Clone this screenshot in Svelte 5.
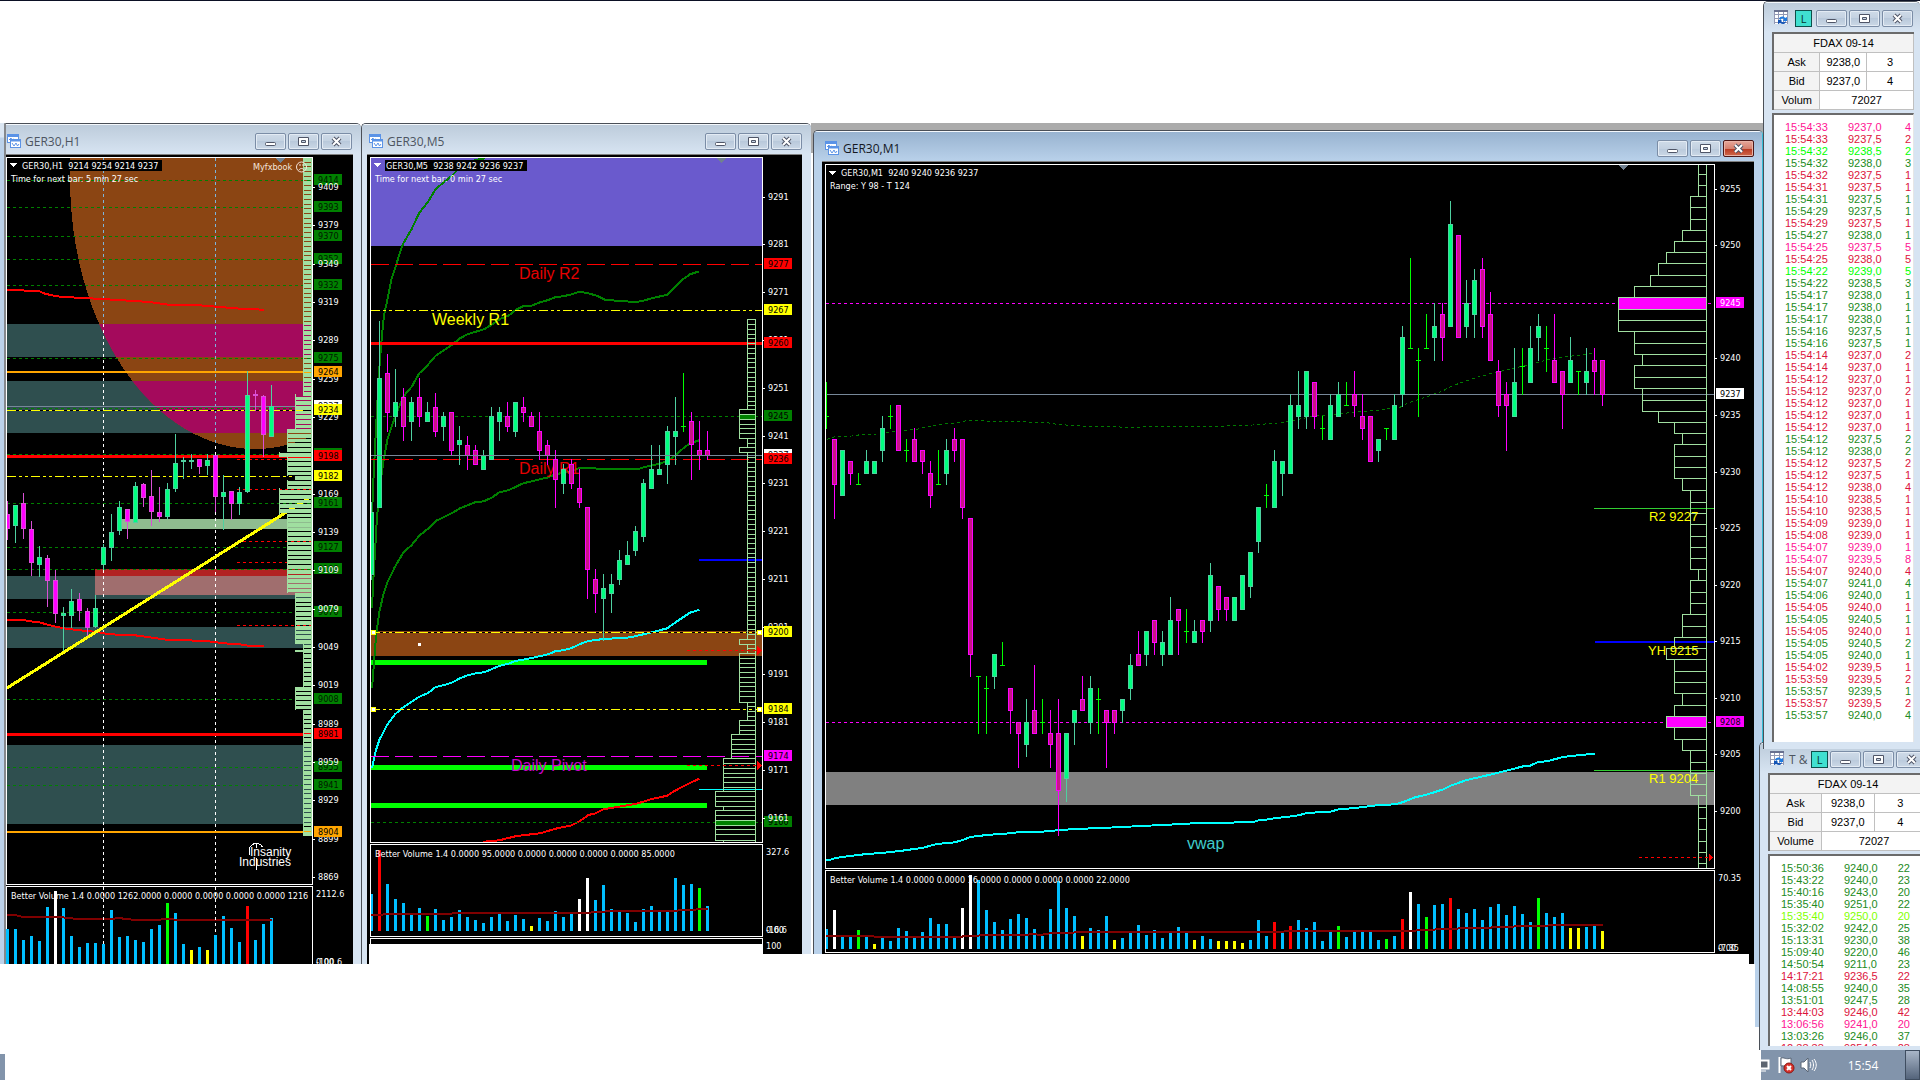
<script lang="ts">
  type Candle = { kind: string; x: number; hi: number; top: number; bottom: number; lo: number };
  type Bar = { x: number; y: number; color: string };

  // Series are stored in sub-pixels: three to a pixel, counted from a pane origin.
  const SUB = 3;

  const COLORS: Record<string, string> = {
    b: "#00bfff",
    w: "#ffffff",
    r: "#ff0000",
    g: "#00ff00",
    y: "#ffff00",
  };

  function candles(data: string, ox: number, oy: number, x0: number): Candle[] {
    return data
      .trim()
      .split(/\s*;\s*/)
      .map((row, i) => {
        const [kind, ...v] = row.split(" ");
        const [hi, top, bottom, lo] = v.map((n) => oy + Math.round(Number(n) / SUB));
        return { kind, x: ox + Math.floor((x0 + 24 * i) / SUB), hi, top, bottom, lo };
      });
  }

  function bars(data: string, ox: number, oy: number, x0: number): Bar[] {
    return data
      .trim()
      .split(/\s+/)
      .map((item, i) => {
        const key = /[a-z]/.test(item[0]) ? item[0] : "b";
        const value = Number(item.replace(/[a-z]/, ""));
        return {
          x: ox + Math.floor((x0 + 24 * i) / SUB) - 1,
          y: oy + Math.round(value / SUB),
          color: COLORS[key],
        };
      });
  }

  function curve(data: string, ox: number, oy: number): string {
    return data
      .trim()
      .split(/\s+/)
      .map((p) => {
        const [x, y] = p.split(",").map(Number);
        return `${(ox + x / SUB).toFixed(1)},${(oy + y / SUB).toFixed(1)}`;
      })
      .join(" ");
  }

  // Outlined volume profile, one cell per price step, growing to the left
  function profile(steps: number[][], right: number, oy: number, step: number): string {
    let d = "";
    for (const [from, to, size] of steps) {
      const left = right - 8 * size;
      const y0 = oy + Math.round(from / SUB) + 0.5;
      const y1 = oy + Math.round(to / SUB) + 0.5;
      d += `M${left + 0.5} ${y0}H${right + 0.5}V${y1}H${left + 0.5}Z`;
      for (let y = from + step; y < to - 4; y += step) {
        d += `M${left} ${oy + Math.round(y / SUB) + 0.5}H${right}`;
      }
    }
    return d;
  }

  // H1 ---------------------------------------------------------------
  const h1Candles = candles(
    `m 1158 1197 1242 1275; g 1170 1170 1232 1284; m 1134 1165 1242 1272; m 1218 1243 1343 1383;
     g 1293 1327 1349 1385; m 1320 1330 1397 1475; m 1365 1396 1496 1524; g 1476 1494 1502 1613;
     g 1422 1458 1502 1538; m 1434 1453 1487 1517; m 1479 1488 1538 1571; g 1440 1479 1535 1538;
     g 1287 1295 1349 1365; g 1197 1251 1298 1337; g 1158 1176 1247 1260; m 1183 1183 1220 1272;
     g 1101 1113 1225 1225; m 1104 1107 1148 1176; m 1065 1143 1190 1232; m 1116 1191 1206 1220;
     g 1104 1122 1205 1212; g 957 1044 1122 1131; g 1026 1035 1041 1092; g 1018 1035 1041 1062;
     m 1032 1032 1055 1077; g 1018 1035 1053 1080; m 1020 1020 1145 1192; g 1080 1131 1145 1245;
     m 1128 1128 1166 1215; g 1116 1131 1166 1200; g 768 840 1131 1134; m 825 837 842 888;
     m 840 843 960 1026; g 810 873 966 966`,
    0, 115, 23,
  );
  const h1Bars = bars(
    `1167 1167 1200 1188 1203 1101 w1053 1104 1188 1221 1209 1209 1212 1110 1191 1188 1200 1206
     1167 1155 g1089 1119 1212 y1230 1221 y1230 1185 1128 1164 1206 r1098 1200 1152 1134`,
    0, 540, 23,
  );
  const h1Upper = curve(
    "21,525 70,525 75,528 118,529 135,536 165,543 190,546 235,548 305,552 450,561 505,569 600,571 660,576 720,581 791,584",
    0, 115,
  );
  const h1Lower = curve(
    "21,240 70,240 90,244 118,247 150,256 190,265 240,271 290,276 330,283 405,286 500,299 620,303 670,310 720,313 745,317 791,318",
    0, 540,
  );
  const h1Average = curve(
    "21,1125 45,1125 70,1131 190,1131 195,1134 240,1137 335,1137 355,1134 405,1140 480,1140 485,1137 520,1137 525,1140 816,1140",
    0, 540,
  );
  const h1Scale: [string, number][] = [
    ["9379", 225], ["9319", 302], ["9289", 340], ["9259", 379], ["9229", 417], ["9169", 494],
    ["9139", 532], ["9049", 647], ["9019", 685], ["8989", 724], ["8929", 800], ["8899", 839],
    ["8869", 877],
  ];
  // Prices painted over the tags instead of under them
  const h1ScaleTop: [string, number][] = [
    ["9409", 187], ["9349", 264], ["9109", 570], ["9079", 609], ["8959", 762],
  ];
  const h1Green: [string, number][] = [
    ["9414", 180], ["9393", 207], ["9370", 236], ["9352", 259], ["9332", 285], ["9275", 358],
    ["9235", 408], ["9199", 454], ["9161", 503], ["9127", 547], ["9109", 569], ["9070", 612],
    ["9008", 699], ["8955", 767], ["8941", 785],
  ];
  const h1Tags: [string, number, string][] = [
    ["9237", 406, "#ffffff"], ["9264", 372, "#ffa500"], ["9234", 410, "#ffff00"],
    ["9198", 456, "#ff0000"], ["9182", 476, "#ffff00"], ["8981", 734, "#ff0000"],
    ["8904", 832, "#ffa500"],
  ];
  const h1Zones: [number, number][] = [[324, 33], [381, 52], [576, 23], [627, 21], [745, 79]];
  // [top, bottom, left edge] of each block of the profile
  const h1Blocks: number[][] = [
    [158, 394, 303], [394, 430, 295], [430, 452, 287], [452, 455, 279], [455, 476, 287],
    [476, 480, 295], [480, 488, 287], [488, 515, 279], [515, 593, 287], [593, 644, 295],
    [644, 688, 303], [688, 710, 295], [710, 836, 303],
  ];

  function stripes(blocks: number[][]) {
    const out: { x: number; y: number; h: number }[] = [];
    for (let n = 0; n < 145; n++) {
      const y = 158 + Math.round(n * 4.68);
      const next = 158 + Math.round((n + 1) * 4.68);
      const block = blocks.find((b) => y >= b[0] - 1 && y < b[1] - 1);
      if (block) out.push({ x: block[2], y, h: next - y - 1 });
    }
    return out;
  }

  // M5 ---------------------------------------------------------------
  const m5Candles = candles(
    `g 1160 1190 1380 1395; g 618 790 1178 1178; m 717 773 893 950; g 762 861 906 935;
     m 819 846 935 977; g 846 861 920 977; m 789 846 906 935; g 861 891 920 920;
     m 834 876 950 965; g 891 903 935 977; m 891 891 1007 1022; g 933 975 991 1049;
     m 963 990 1022 1064; m 990 1005 1049 1049; g 1005 1020 1064 1064; g 876 903 1034 1034;
     g 876 891 920 977; m 861 903 935 950; g 861 861 950 965; m 846 876 893 920;
     m 891 903 935 935; m 891 948 1007 1034; m 975 990 1022 1049; m 1005 1032 1094 1178;
     g 1047 1062 1106 1136; m 1032 1047 1106 1121; m 1062 1119 1163 1178; m 1177 1177 1365 1452;
     m 1362 1392 1436 1493; g 1377 1419 1452 1578; g 1377 1407 1436 1493; g 1305 1335 1394 1409;
     g 1278 1320 1349 1349; g 1233 1248 1307 1322; g 1092 1104 1265 1280; g 990 1062 1121 1121;
     g 990 1062 1079 1079; g 933 948 1049 1106; g 846 948 965 1049; d 774 933 933 950;
     m 891 918 991 1094; m 918 1005 1022 1064; m 948 1005 1022 1034`,
    360, 115, 34,
  );
  const m5Bars = bars(
    `1062 r930 1032 1077 1089 1125 1104 g1128 1107 1140 1131 1110 1131 1140 1149 1131 1119 1143
     1125 1137 y1158 1134 1143 1113 1131 1122 w1077 w1014 1080 1035 1107 1116 1119 1146 1107 1098
     1113 1113 1014 1035 1032 g1044 1098`,
    360, 540, 34,
  );
  const m5Bands = [
    curve(
      "36,1200 40,1100 45,1000 50,900 58,760 65,670 72,600 83,550 95,490 107,455 120,412 130,385 155,342 178,293 203,262 227,222 250,203 275,183 292,165 345,135 375,130",
      360, 115,
    ),
    curve(
      "36,1480 40,1395 47,1275 50,1220 58,1130 70,1040 83,970 107,900 130,845 155,815 178,775 203,750 227,722 275,690 300,670 322,658 348,650 372,643 397,628 420,612 445,602 470,583 490,573 515,572 540,562 565,555 587,546 610,544 635,538 658,530 685,535 710,542 735,554 780,558 830,561 850,557 875,550 922,539 945,515 970,492 990,478 1018,469",
      360, 115,
    ),
    curve(
      "36,1720 42,1645 48,1565 58,1490 70,1440 83,1400 105,1355 130,1313 155,1290 178,1262 203,1242 227,1218 275,1195 300,1180 345,1162 372,1159 397,1147 418,1132 445,1126 490,1105 540,1093 565,1087 587,1078 635,1068 660,1058 705,1058 710,1062 835,1062 850,1057 900,1046 922,1038 945,1022 970,1000 990,985 1018,976",
      360, 115,
    ),
  ];
  const m5Vwap = curve(
    "36,685 45,640 58,600 83,552 105,523 130,502 178,470 203,460 227,441 250,436 275,428 300,415 322,406 348,400 372,397 418,378 445,371 467,363 515,354 565,343 587,333 610,331 635,324 660,312 685,303 730,297 800,293 825,289 875,277 922,265 945,248 990,218 1018,209",
    360, 540,
  );
  const m5Red = curve(
    "370,905 418,901 445,894 470,888 540,880 587,866 635,856 660,843 685,825 707,820 730,808 760,803 830,791 875,777 922,767 945,752 990,729 1018,716",
    360, 540,
  );
  const m5Average = curve(
    "33,1125 83,1123 325,1120 685,1118 755,1113 945,1112 1020,1108 1043,1106",
    360, 540,
  );
  const m5Profile = profile(
    [
      [613, 883, 1], [883, 970, 2], [970, 997, 1], [997, 1012, 2], [1012, 1572, 1],
      [1572, 1586, 2], [1586, 1614, 1], [1614, 1760, 2], [1760, 1816, 1], [1816, 1858, 2],
      [1858, 1930, 3], [1930, 2029, 4], [2029, 2074, 5], [2074, 2086, 4], [2086, 2174, 5],
      [2174, 2181, 4],
    ],
    755, 115, 14.34,
  );
  const m5Scale: [string, number][] = [
    ["9291", 197], ["9281", 244], ["9271", 292], ["9261", 340], ["9251", 388], ["9241", 436],
    ["9231", 483], ["9221", 531], ["9211", 579], ["9201", 627], ["9191", 674], ["9181", 722],
    ["9171", 770],
  ];
  const m5Tags: [string, number, string][] = [
    ["9277", 264, "#ff0000"], ["9267", 310, "#ffff00"], ["9260", 343, "#ff0000"],
    ["9245", 416, "#008000"], ["9237", 455, "#ffffff"], ["9236", 459, "#ff0000"],
    ["9200", 632, "#ffff00"], ["9184", 709, "#ffff00"], ["9174", 756, "#ff00ff"],
    ["9160", 822, "#008000"],
  ];

  // M1 ---------------------------------------------------------------
  const m1Candles = candles(
    `d 786 889 889 927; m 957 957 1095 1197; g 990 990 1128 1128; m 1023 1023 1062 1095;
     d 1059 1092 1092 1095; g 990 1023 1062 1062; g 1023 1023 1062 1062; g 888 924 993 1026;
     d 855 888 888 927; m 855 855 993 993; d 957 990 990 1026; m 924 957 1026 1026;
     m 990 990 1026 1062; m 1023 1059 1128 1164; d 990 1092 1092 1095; g 957 990 1062 1095;
     m 924 957 993 1026; m 957 957 1164 1197; m 1194 1194 1605 1671; d 1668 1668 1668 1842;
     d 1668 1704 1704 1842; g 1602 1602 1671 1707; d 1566 1635 1635 1638; m 1704 1704 1773 1842;
     m 1806 1806 1842 1945; g 1737 1806 1875 1911; m 1635 1770 1842 1842; d 1737 1806 1806 1842;
     m 1770 1839 1875 1945; m 1737 1839 2013 2148; g 1839 1839 1977 2046; g 1770 1770 1809 1875;
     m 1668 1737 1773 1773; g 1668 1704 1809 1842; d 1704 1737 1737 1842; m 1770 1770 1809 1945;
     m 1770 1770 1809 1842; g 1737 1737 1773 1809; g 1602 1635 1707 1740; m 1533 1602 1638 1638;
     g 1533 1533 1605 1638; m 1500 1500 1569 1605; g 1533 1566 1605 1638; g 1431 1500 1605 1605;
     m 1467 1467 1503 1605; d 1467 1533 1533 1569; g 1500 1533 1569 1569; m 1500 1500 1536 1569;
     g 1329 1365 1503 1536; m 1398 1398 1470 1503; m 1431 1431 1470 1503; g 1431 1431 1503 1503;
     g 1365 1365 1470 1470; g 1296 1296 1401 1434; g 1161 1161 1266 1299; d 1092 1125 1125 1164;
     g 990 1023 1164 1164; g 1023 1023 1062 1128; g 822 855 1062 1062; g 753 855 891 927;
     g 753 753 891 927; m 786 786 891 927; d 888 924 924 960; g 822 855 960 960;
     g 786 822 891 891; d 786 855 855 858; m 753 822 858 891; m 822 888 927 960;
     m 888 888 1026 1026; g 957 957 993 1026; d 924 924 924 960; g 822 855 960 960;
     g 618 651 825 860; d 414 684 684 687; d 684 720 720 891; d 582 684 684 687;
     g 549 618 654 723; m 549 582 654 723; g 243 312 621 621; m 345 345 654 654;
     g 480 549 621 654; g 447 480 585 654; m 414 447 621 654; m 516 582 723 723;
     m 720 753 858 891; m 786 822 858 993; g 684 786 891 891; d 684 738 738 825;
     g 618 684 789 789; g 582 618 654 723; d 618 684 684 756; m 582 720 789 789;
     m 753 753 825 927; g 651 720 789 789; d 753 753 753 825; g 684 753 789 825;
     m 684 720 756 825; m 720 720 825 858`,
    810, 120, 49,
  );
  const m1Bars = bars(
    `1167 w1110 1188 1188 g1170 1188 y1212 1194 1203 1164 1173 1191 1176 1134 1152 1152 1191 w1104
     w1005 1020 1110 1146 1170 1137 1122 1134 1167 1188 1107 1023 1104 1128 y1188 1164 1170 1128
     y1200 1194 1179 1155 1185 1170 1194 1179 1161 1179 y1200 1188 1197 y1203 y1203 y1203 y1209
     1200 1140 1188 r1146 1179 r1158 1140 1164 1146 1203 1176 g1158 1191 1176 1176 1176 1200 g1197
     1188 r1137 w1056 1092 g1131 1095 1092 r1074 1107 1119 1107 1140 1101 1092 1125 1098 1122 1146
     g1074 1119 1131 1119 y1164 y1164 1161 1158 y1173`,
    810, 540, 49,
  );
  const m1Mean = curve(
    "50,958 75,950 125,948 160,943 200,942 230,937 255,935 300,930 325,927 345,922 370,917 400,912 440,909 470,902 510,901 530,904 630,905 710,908 740,913 810,918 930,921 995,921 1010,919 1250,918 1265,916 1330,915 1400,909 1425,907 1450,901 1510,889 1600,880 1710,870 1770,862 1795,849 1840,834 1900,812 1925,798 2000,772 2050,759 2110,745 2175,730 2230,715 2270,710 2345,701",
    810, 120,
  );
  const m1Vwap = curve(
    "48,960 60,960 75,954 120,948 170,942 215,939 270,933 340,923 380,912 435,907 465,898 480,891 530,885 600,880 630,876 695,875 750,870 800,867 870,864 940,861 990,858 1060,855 1150,850 1250,848 1330,846 1350,840 1380,838 1395,834 1430,831 1470,825 1490,819 1560,815 1590,807 1630,805 1700,796 1755,793 1780,786 1815,772 1850,764 1900,748 1925,736 1970,720 2020,709 2070,697 2140,679 2160,677 2185,666 2210,664 2260,651 2310,645 2355,641",
    810, 540,
  );
  const m1Average = curve(
    "48,1188 190,1188 195,1191 455,1191 460,1188 505,1188 510,1185 655,1184 665,1181 690,1185 720,1180 790,1178 800,1176 1420,1175 1430,1172 1800,1172 1870,1170 1880,1167 1940,1167 1950,1164 2040,1164 2050,1161 2105,1161 2120,1158 2210,1158 2220,1155 2379,1155",
    810, 540,
  );
  const m1Profile = profile(
    [
      [127, 228, 1], [228, 330, 2], [330, 364, 3], [364, 397, 4], [397, 430, 5], [430, 466, 6],
      [466, 499, 7], [499, 532, 9], [532, 634, 11], [634, 703, 9], [703, 736, 8], [736, 805, 9],
      [805, 874, 8], [874, 907, 6], [907, 940, 4], [940, 973, 3], [973, 1075, 4], [1075, 1111, 3],
      [1111, 1348, 2], [1348, 1381, 1], [1381, 1483, 2], [1483, 1552, 3], [1552, 1585, 4],
      [1585, 1618, 5], [1618, 1720, 4], [1720, 1756, 3], [1756, 1789, 4], [1789, 1822, 5],
      [1822, 1858, 4], [1858, 1891, 3], [1891, 2026, 2], [2026, 2244, 1],
    ],
    1706, 120, 33.95,
  );
  const m1Scale: [string, number][] = [
    ["9255", 189], ["9250", 245], ["9240", 358], ["9235", 415], ["9230", 472], ["9225", 528],
    ["9220", 585], ["9215", 641], ["9210", 698], ["9205", 754], ["9200", 811],
  ];
  const m1Tags: [string, number, string][] = [
    ["9245", 303, "#ff00ff"], ["9237", 394, "#ffffff"], ["9208", 722, "#ff00ff"],
  ];

  // Time & sales -----------------------------------------------------
  function trades(data: string) {
    return data
      .trim()
      .split(/\s*;\s*/)
      .map((row) => {
        const [kind, time, price, size] = row.split(" ");
        return { kind, time, price, size };
      });
  }

  const tape = trades(
    `pink 15:54:33 9237,0 4; red 15:54:33 9237,5 2; lime 15:54:32 9238,5 2; green 15:54:32 9238,0 3;
     red 15:54:32 9237,5 1; red 15:54:31 9237,5 1; green 15:54:31 9237,5 1; green 15:54:29 9237,5 1;
     red 15:54:29 9237,5 1; green 15:54:27 9238,0 1; pink 15:54:25 9237,5 5; red 15:54:25 9238,0 5;
     lime 15:54:22 9239,0 5; green 15:54:22 9238,5 3; green 15:54:17 9238,0 1; green 15:54:17 9238,0 1;
     green 15:54:17 9238,0 1; green 15:54:16 9237,5 1; green 15:54:16 9237,5 1; red 15:54:14 9237,0 2;
     red 15:54:14 9237,0 1; red 15:54:12 9237,0 1; red 15:54:12 9237,0 2; red 15:54:12 9237,0 1;
     red 15:54:12 9237,0 1; red 15:54:12 9237,0 1; green 15:54:12 9237,5 2; green 15:54:12 9238,0 2;
     red 15:54:12 9237,5 2; red 15:54:12 9237,5 1; red 15:54:12 9238,0 4; red 15:54:10 9238,5 1;
     red 15:54:10 9238,5 1; red 15:54:09 9239,0 1; red 15:54:08 9239,0 1; pink 15:54:07 9239,0 1;
     pink 15:54:07 9239,5 8; red 15:54:07 9240,0 4; green 15:54:07 9241,0 4; green 15:54:06 9240,0 1;
     red 15:54:05 9240,0 1; green 15:54:05 9240,5 1; red 15:54:05 9240,0 1; green 15:54:05 9240,5 2;
     green 15:54:05 9240,0 1; red 15:54:02 9239,5 1; red 15:53:59 9239,5 2; green 15:53:57 9239,5 1;
     red 15:53:57 9239,5 2; green 15:53:57 9240,0 4`,
  );
  const blocks = trades(
    `green 15:50:36 9240,0 22; green 15:43:22 9240,0 23; green 15:40:16 9243,0 20;
     green 15:35:40 9251,0 22; chartreuse 15:35:40 9250,0 20; green 15:32:02 9242,0 25;
     green 15:13:31 9230,0 38; green 15:09:40 9220,0 46; green 14:50:54 9211,0 23;
     red 14:17:21 9236,5 22; green 14:08:55 9240,0 35; green 13:51:01 9247,5 28;
     red 13:44:03 9246,0 42; pink 13:06:56 9241,0 20; green 13:03:26 9246,0 37;
     red 12:38:38 9254,0 28`,
  );
</script>

{#snippet chartIcon()}
  <svg class="icon" width="16" height="16" viewBox="0 0 16 16" aria-hidden="true">
    <rect x="1.5" y="1.5" width="11" height="8" fill="#fff" stroke="#5b93e6" />
    <path d="M1 3h12" stroke="#5b93e6" stroke-width="2" />
    <path d="M3 7l2-2 1 2 2-1" fill="none" stroke="#5b93e6" />
    <rect x="4.500" y="6.500" width="10" height="8" fill="#fff" stroke="#5b93e6" />
    <path d="M4 7.500h11" stroke="#5b93e6" stroke-width="2" />
    <path d="M6 10l2 3 2-3 1.500 3 1.500-2" fill="none" stroke="#5b93e6" />
  </svg>
{/snippet}

{#snippet gridIcon()}
  <svg class="icon" width="15" height="15" viewBox="0 0 15 15" aria-hidden="true">
    <rect width="14" height="14" fill="#fff" />
    <path d="M0 .5h14M0 4.500h14M0 8.500h14M0 12.500h14M.5 0v14M4.500 0v14M9.500 0v14M13.500 0v14" stroke="#9298b4" />
    <path d="M0 1h14" stroke="#68708f" stroke-width="2" />
    <path d="M5 9c1-3 5-3 6-1l2-1v4H9l1-2c-1-1-3-1-3 1z" fill="#1f7be0" />
    <path d="M4 14v-4h4l-1 1c2 2 4 1 5 0 0 3-3 4-6 2z" fill="#1253b5" />
  </svg>
{/snippet}

{#snippet controls()}
  <div class="controls">
    <button type="button" aria-label="Minimize">
      <svg width="13" height="11" viewBox="0 0 13 11">
        <rect x="1.500" y="6.500" width="10" height="3" rx="1" fill="#fff" stroke="#4f5567" />
      </svg>
    </button>
    <button type="button" aria-label="Restore">
      <svg width="13" height="11" viewBox="0 0 13 11">
        <path d="M1.500 1.500h10v8h-10z" fill="#fff" stroke="#4f5567" />
        <path d="M4.500 4.500h4v2h-4z" fill="#c8d6e6" stroke="#4f5567" />
      </svg>
    </button>
    <button type="button" class="close" aria-label="Close">
      <svg width="13" height="11" viewBox="0 0 13 11">
        <path d="M3 2l7 7M10 2l-7 7" stroke="#4f5567" stroke-width="4" />
        <path d="M3 2l7 7M10 2l-7 7" stroke="#fff" stroke-width="2" />
      </svg>
    </button>
  </div>
{/snippet}

{#snippet candleSet(list: Candle[], style: string)}
  <g class="candles {style}">
    {#each list as c}
      <g class={c.kind}>
        <rect class="edge" x={c.x} y={c.hi} width="1" height={c.lo - c.hi} />
        {#if c.kind === "d"}
          <rect class="edge" x={c.x - 2} y={c.top} width="5" height="1" />
        {:else}
          <rect class="edge" x={c.x - 2} y={c.top} width="5" height={c.bottom - c.top} />
          <rect class="body" x={c.x - 1} y={c.top + 1} width="3" height={Math.max(0, c.bottom - c.top - 2)} />
        {/if}
      </g>
    {/each}
  </g>
{/snippet}

{#snippet volume(list: Bar[], base: number, average: string)}
  {#each list as b}
    <rect x={b.x} y={b.y} width="3" height={base - b.y} fill={b.color} />
  {/each}
  <polyline points={average} class="average" />
{/snippet}

{#snippet scale(list: [string, number][], x: number)}
  {#each list as [label, y]}
    <rect x={x} y={y} width="2" height="1" fill="#fff" />
    <text x={x + 5} y={y + 3}>{label}</text>
  {/each}
{/snippet}

{#snippet tag(label: string, y: number, x: number, color: string, ink: string)}
  <rect {x} y={y - 6} width="28" height="11" fill={color} />
  <text x={x + 4} y={y + 3} fill={ink}>{label}</text>
{/snippet}

{#snippet level(y: number, from: number, to: number, style: string)}
  <line x1={from} x2={to} y1={y + 0.5} y2={y + 0.5} class={style} />
{/snippet}

{#snippet quote(volumeLabel: string)}
  <table class="quote">
    <thead>
      <tr><th colspan="3">FDAX 09-14</th></tr>
    </thead>
    <tbody>
      <tr><th scope="row">Ask</th><td>9238,0</td><td>3</td></tr>
      <tr><th scope="row">Bid</th><td>9237,0</td><td>4</td></tr>
      <tr><th scope="row">{volumeLabel}</th><td colspan="2">72027</td></tr>
    </tbody>
  </table>
{/snippet}

{#snippet sales(list: ReturnType<typeof trades>)}
  <div class="tape">
    <table>
      <tbody>
        {#each list as t}
          <tr class={t.kind}><td>{t.time}</td><td>{t.price}</td><td>{t.size}</td></tr>
        {/each}
      </tbody>
    </table>
  </div>
{/snippet}

<main class="desktop">
  <div class="edge-top"></div>
  <div class="backdrop"></div>
  <div class="stub"></div>
  <div class="stub-bottom"></div>

  <section class="window h1">
    <header class="titlebar">
      {@render chartIcon()}
      <h2>GER30,H1</h2>
      {@render controls()}
    </header>
    <svg class="chart" width="347" height="810" viewBox="6 154 347 810">
      <defs>
        <clipPath id="h1-pane"><rect x="7" y="158" width="305" height="726" /></clipPath>
        <clipPath id="h1-ellipse"><ellipse cx="255" cy="178" rx="185" ry="271" /></clipPath>
      </defs>
      <rect x="6" y="154" width="347" height="1" fill="#808080" />
      <g clip-path="url(#h1-pane)">
        {#each h1Zones as [y, h]}
          <rect x="7" {y} width="305" height={h} fill="#2f4f4f" />
        {/each}
        <ellipse cx="255" cy="178" rx="185" ry="271" fill="#8b4513" />
        <g clip-path="url(#h1-ellipse)">
          <rect x="7" y="324" width="305" height="33" fill="#a40a5c" />
          <rect x="7" y="381" width="305" height="52" fill="#a40a5c" />
        </g>
        <rect x="120" y="519" width="192" height="10" fill="#8fbc8f" />
        <rect x="95" y="569" width="217" height="7" fill="#b22222" />
        <rect x="95" y="576" width="217" height="19" fill="#a06e6e" />
        {#each h1Green as [, y]}
          {@render level(y, 7, 313, "dot green")}
        {/each}
        <line x1="103.5" x2="103.5" y1="158" y2="324" class="dot session sky" />
        <line x1="103.5" x2="103.5" y1="324" y2="884" class="dot session" />
        <line x1="215.5" x2="215.5" y1="158" y2="446" class="dot session sky" />
        <line x1="215.5" x2="215.5" y1="446" y2="884" class="dot session" />
        <rect x="7" y="371" width="305" height="2" fill="#ffa500" />
        <rect x="7" y="831" width="305" height="2" fill="#ffa500" />
        <rect x="7" y="455" width="305" height="3" fill="#ff0000" />
        <rect x="7" y="733" width="305" height="3" fill="#ff0000" />
        <rect x="7" y="410" width="305" height="1" fill="#000" />
        {@render level(410, 7, 303, "dashdot yellow")}
        {@render level(476, 7, 303, "dashdot yellow")}
        {@render level(406, 7, 312, "slate")}
        {#each [459, 489, 541, 562, 625] as y}
          {@render level(y, 237, 311, "dot red")}
        {/each}
        <polyline points={h1Upper} class="thick red" />
        <polyline points={h1Lower} class="thick red" />
        {@render candleSet(h1Candles, "orchid")}
        <line x1="7" y1="688" x2="312" y2="496" class="trend" />
        <g fill="#a0dfa0">
          {#each stripes(h1Blocks) as s}
            <rect x={s.x} y={s.y} width={312 - s.x} height={s.h} />
          {/each}
          {#each h1Blocks as [top, bottom, left]}
            <rect x={left} y={top} width="1" height={bottom - top} />
          {/each}
          <rect x="311" y="158" width="1" height="678" />
          <rect x="295" y="650" width="8" height="2" />
        </g>
      </g>
      <path d="M275 158h10l-5 5z" fill="#708090" />
      <path d="M6.500 157.500h306v727h-306zM6.500 964v-77.500h306v77.500" class="frame" />
      {@render volume(h1Bars, 964, h1Average)}
      <line x1="103.5" x2="103.5" y1="887" y2="945" class="dot session" />
      <line x1="215.5" x2="215.5" y1="887" y2="935" class="dot session" />
      <rect x="21" y="160" width="141" height="11" fill="#000" />
      <path d="M10 163h7l-3.500 4z" fill="#fff" />
      <text x="22" y="169">GER30,H1&nbsp; 9214 9254 9214 9237</text>
      <text x="11" y="182">Time for next bar: 5 min 27 sec</text>
      <text x="253" y="170" fill="#f5e6dc">Myfxbook</text>
      <g fill="none" stroke="#f5e6dc" class="smooth">
        <circle cx="301.5" cy="167" r="5" />
        <path d="M299 165h2M302 165h2M299 170c1-2 4-2 5 0" />
      </g>
      <g class="insanity">
        <path d="M249.500 855v-7c3-6 10-6 13-1M256 844v4M256 858v12" fill="none" stroke="#fff" />
        <text x="250" y="856">Insanity</text>
        <text x="239" y="866">Industries</text>
      </g>
      <text x="11" y="899">Better Volume 1.4 0.0000 1262.0000 0.0000 0.0000 0.0000 0.0000 1216</text>
      <rect x="313" y="887" width="40" height="20" fill="#000" />
      <text x="316" y="897">2112.6</text>
      <text x="316" y="965">0.00</text>
      <text x="316" y="965">-100.6</text>
      {@render scale(h1Scale, 313)}
      {#each h1Green as [label, y]}
        {@render tag(label, y, 314, "#008000", "#001800")}
      {/each}
      {#each h1Tags as [label, y, color]}
        {@render tag(label, y, 314, color, "#000")}
      {/each}
      {@render scale(h1ScaleTop, 313)}
    </svg>
  </section>

  <section class="window m5">
    <header class="titlebar">
      {@render chartIcon()}
      <h2>GER30,M5</h2>
      {@render controls()}
    </header>
    <svg class="chart" width="435" height="810" viewBox="367 154 435 810">
      <defs>
        <clipPath id="m5-pane"><rect x="371" y="158" width="391" height="684" /></clipPath>
        <clipPath id="m5-volume"><rect x="371" y="845" width="391" height="91" /></clipPath>
      </defs>
      <rect x="367" y="154" width="435" height="1" fill="#808080" />
      <g clip-path="url(#m5-pane)">
        <rect x="371" y="158" width="391" height="88" fill="#6a5acd" />
        <rect x="371" y="631" width="391" height="25" fill="#8b4513" />
        <rect x="371" y="660" width="336" height="5" fill="#00ff00" />
        <rect x="371" y="765" width="336" height="5" fill="#00ff00" />
        <rect x="371" y="803" width="336" height="5" fill="#00ff00" />
        {#each m5Bands as points}
          <polyline {points} class="thick green" />
        {/each}
        <polyline points={m5Vwap} class="thick cyan" />
        <polyline points={m5Red} class="thick red" />
        {@render level(264, 371, 762, "dash red")}
        {@render level(310, 371, 762, "dashdot yellow")}
        <rect x="371" y="342" width="391" height="3" fill="#ff0000" />
        {@render level(416, 371, 762, "dot green")}
        {@render level(459, 371, 762, "dash red")}
        <rect x="371" y="632" width="391" height="1" fill="#000" />
        {@render level(632, 371, 762, "dashdot yellow")}
        {@render level(709, 371, 762, "dashdot yellow")}
        {@render level(756, 371, 762, "dash magenta")}
        {@render level(822, 371, 762, "dot green")}
        <text x="519" y="279" class="note" fill="#e60000">Daily R2</text>
        <text x="432" y="325" class="note" fill="#ffff00">Weekly R1</text>
        <text x="519" y="474" class="note" fill="#e60000">Daily R1</text>
        <text x="511" y="771" class="note" fill="#cc00cc">Daily Pivot</text>
        {@render candleSet(m5Candles, "")}
        {@render level(455, 371, 762, "slate")}
        <rect x="699" y="559" width="63" height="2" fill="#0000ff" />
        <rect x="699" y="789" width="63" height="1" fill="#00ffff" />
        <rect x="739" y="415" width="17" height="4" fill="#008000" />
        <rect x="715" y="821" width="41" height="4" fill="#008000" />
        <path d={m5Profile} class="profile" />
        {@render level(650, 687, 758, "dot red")}
        {@render level(765, 687, 758, "dot red")}
        <path d="M757 646l5 4.500-5 4.500zM757 761l5 4.500-5 4.500z" fill="#ff0000" />
        {#each [632, 709] as y}
          <rect x="371" y={y - 2} width="5" height="5" fill="#ffff00" />
          <rect x="372" y={y - 1} width="3" height="3" fill="#fff" />
          <rect x="757" y={y - 2} width="5" height="5" fill="#ffff00" />
          <rect x="758" y={y - 1} width="3" height="3" fill="#fff" />
        {/each}
        <rect x="418" y="643" width="3" height="3" fill="#fff" />
      </g>
      <path d="M716 158h10l-5 5z" fill="#708090" />
      <path d="M370.500 157.500h392v685h-392zM370.500 844.500h392v92h-392zM370.500 944v-5.500h392v5.500" class="frame" />
      <g clip-path="url(#m5-volume)">
        {@render volume(m5Bars, 931, m5Average)}
      </g>
      <rect x="385" y="160" width="142" height="11" fill="#000" />
      <path d="M374 163h7l-3.500 4z" fill="#fff" />
      <text x="386" y="169">GER30,M5&nbsp; 9238 9242 9236 9237</text>
      <text x="375" y="182">Time for next bar: 0 min 27 sec</text>
      <text x="375" y="857">Better Volume 1.4 0.0000 95.0000 0.0000 0.0000 0.0000 0.0000 85.0000</text>
      {@render scale(m5Scale, 763)}
      {#each m5Tags as [label, y, color]}
        {@render tag(label, y, 764, color, "#000")}
      {/each}
      {@render scale([["9161", 818]], 763)}
      <text x="766" y="855">327.6</text>
      <text x="766" y="933">0.00</text>
      <text x="766" y="933">-16.6</text>
      <text x="766" y="949">100</text>
    </svg>
  </section>

  <section class="window m1 active">
    <header class="titlebar">
      {@render chartIcon()}
      <h2>GER30,M1</h2>
      {@render controls()}
    </header>
    <svg class="chart" width="932" height="866" viewBox="822 161 932 866">
      <defs>
        <clipPath id="m1-pane"><rect x="826" y="165" width="888" height="704" /></clipPath>
        <clipPath id="m1-volume"><rect x="826" y="871" width="888" height="82" /></clipPath>
      </defs>
      <rect x="822" y="161" width="932" height="1" fill="#808080" />
      <g clip-path="url(#m1-pane)">
        <rect x="826" y="772" width="888" height="33" fill="#808080" />
        {@render level(303, 826, 1712, "dot magenta")}
        {@render level(722, 826, 1712, "dot magenta")}
        <polyline points={m1Mean} class="mean" />
        <polyline points={m1Vwap} class="thick cyan" />
        {@render level(394, 826, 1714, "slate")}
        {@render candleSet(m1Candles, "")}
        <rect x="1594" y="508" width="120" height="1" fill="#32cd32" />
        <rect x="1595" y="641" width="119" height="2" fill="#0000ff" />
        <rect x="1594" y="770" width="120" height="1" fill="#32cd32" />
        <rect x="1618" y="297" width="88" height="12" fill="#ff00ff" />
        <rect x="1666" y="716" width="40" height="11" fill="#ff00ff" />
        <path d={m1Profile} class="profile" />
        <text x="1649" y="521" class="pivot" fill="#ffff00">R2 9227</text>
        <text x="1648" y="655" class="pivot" fill="#ffff00">YH 9215</text>
        <text x="1649" y="783" class="pivot" fill="#ffff00">R1 9204</text>
        {@render level(857, 1639, 1711, "dot red")}
        <path d="M1709 854l4 3.500-4 3.500z" fill="#ff0000" />
        <text x="1187" y="849" class="note" fill="#40cccc">vwap</text>
      </g>
      <path d="M1618 165h10l-5 5z" fill="#708090" />
      <path d="M825.500 164.500h889v704h-889zM825.500 870.500h889v82h-889z" class="frame" />
      <g clip-path="url(#m1-volume)">
        {@render volume(m1Bars, 949, m1Average)}
      </g>
      <text x="830" y="883">Better Volume 1.4 0.0000 0.0000 16.0000 0.0000 0.0000 0.0000 22.0000</text>
      <path d="M829 171h7l-3.500 4z" fill="#fff" />
      <text x="841" y="176">GER30,M1&nbsp; 9240 9240 9236 9237</text>
      <text x="830" y="189">Range: Y 98 - T 124</text>
      {@render scale(m1Scale, 1715)}
      {#each m1Tags as [label, y, color]}
        {@render tag(label, y, 1716, color, label === "9245" ? "#fff" : "#000")}
      {/each}
      <text x="1718" y="881">70.35</text>
      <text x="1718" y="951">0.00</text>
      <text x="1718" y="951">-7.35</text>
    </svg>
  </section>

  <section class="window sales-blocks">
    <header class="titlebar">
      {@render gridIcon()}
      <span class="name">T &amp;</span>
      <button type="button" class="link">L</button>
      {@render controls()}
    </header>
    {@render quote("Volume")}
    {@render sales(blocks)}
  </section>

  <section class="window sales-all">
    <header class="titlebar">
      {@render gridIcon()}
      <span class="name"></span>
      <button type="button" class="link">L</button>
      {@render controls()}
    </header>
    {@render quote("Volum")}
    {@render sales(tape)}
  </section>

  <footer class="taskbar">
    <svg width="12" height="16" viewBox="0 0 12 16" aria-hidden="true">
      <path d="M0 3.500h7.500v8H0" fill="#5c6470" stroke="#fff" stroke-width="2" />
      <path d="M0 14h5" stroke="#fff" />
    </svg>
    <svg width="18" height="18" viewBox="0 0 18 18" aria-hidden="true">
      <path d="M2.500 1v16" stroke="#fff" stroke-width="2" />
      <path d="M4 2c3-1 5 2 10 0v8c-4 2-7-1-10 0z" fill="#fff" stroke="#5b6677" />
      <circle cx="12" cy="12" r="5" fill="#d8322c" stroke="#8e1712" />
      <path d="M10 10l4 4M14 10l-4 4" stroke="#fff" stroke-width="2" />
    </svg>
    <svg width="18" height="16" viewBox="0 0 18 16" aria-hidden="true">
      <path d="M2 5h3l4-4v14l-4-4H2z" fill="#fff" stroke="#5b6677" />
      <path d="M11 5c1 2 1 4 0 6M13 3c2 3 2 7 0 10M15 2c3 4 3 8 0 12" fill="none" stroke="#fff" />
    </svg>
    <time>15:54</time>
    <button type="button" class="peek" aria-label="Show desktop"></button>
  </footer>
</main>

<style>
  :global(body) {
    background: #fff;
  }

  .desktop {
    position: relative;
    min-height: 100vh;
    overflow: hidden;
    font-family: "Open Sans", "Noto Sans", sans-serif;
  }

  .edge-top {
    height: 1px;
    background: #0b1024;
  }

  .backdrop {
    position: absolute;
    left: 811px;
    top: 123px;
    width: 952px;
    height: 30px;
    background: #ababab;
  }

  .stub {
    position: absolute;
    left: 0;
    top: 123px;
    width: 4px;
    height: 841px;
    background: linear-gradient(#dbe6f2 14px, #bcd2ea 15px);
  }

  .stub-bottom {
    position: absolute;
    left: 0;
    top: 1054px;
    width: 5px;
    height: 26px;
    background: #8294ab;
  }

  .window {
    position: absolute;
    box-sizing: border-box;
    overflow: hidden;
    display: flex;
    flex-direction: column;
    background: #d7e4f2;
    border: 1px solid #4a4f57;
    border-width: 1px 0 0 1px;
    border-radius: 5px 5px 0 0;
  }

  .h1 {
    left: 4px;
    top: 123px;
    width: 357px;
    height: 841px;
    border-left: 2px solid #85888c;
    border-radius: 0 5px 0 0;
    padding-right: 8px;
  }

  .m5 {
    left: 361px;
    top: 123px;
    width: 450px;
    height: 841px;
    padding: 0 9px 0 5px;
    clip-path: polygon(0 0, 100% 0, 100% 831px, 402px 831px, 402px 821px, 8px 821px, 8px 100%, 0 100%);
  }

  .m1 {
    left: 813px;
    top: 130px;
    width: 950px;
    height: 897px;
    padding: 0 8px;
    border-right: 1px solid #35bcd6;
    background: #b9d1ea;
    clip-path: polygon(0 0, 100% 0, 100% 100%, 942px 100%, 942px 834px, 936px 834px, 936px 824px, 0 824px);
  }

  .titlebar {
    display: flex;
    flex: none;
    align-items: flex-start;
    box-sizing: border-box;
    height: 30px;
    padding-top: 9px;
    margin: 0 -9px 0 -8px;
    padding-left: 10px;
    padding-right: 9px;
    background: linear-gradient(#bccbda, #d7e4f2);
    box-shadow: inset 0 1px #f4f8fc;
  }

  .h1 .titlebar {
    margin: 0 -8px 0 0;
    padding-left: 0;
    padding-right: 9px;
  }

  .m5 .titlebar {
    margin-left: -5px;
    padding-left: 6px;
  }

  .active .titlebar {
    margin-right: -8px;
    padding-right: 8px;
    background: linear-gradient(#97b2cf, #b9d1ea);
  }

  .icon {
    flex: none;
  }

  h2 {
    margin: 0 0 0 3px;
    font-size: 12px;
    line-height: 17px;
    font-weight: 400;
    color: #4d5561;
  }

  .active h2 {
    color: #14181f;
  }

  .controls {
    display: flex;
    flex: none;
    gap: 2px;
    margin-left: auto;
  }

  .controls button {
    display: flex;
    align-items: center;
    justify-content: center;
    width: 31px;
    height: 17px;
    padding: 0;
    border: 1px solid #7b8da6;
    border-radius: 2px;
    background: linear-gradient(#cfdbe8, #c3d1e1 50%, #b9c9db 50%, #cbd8e6);
    box-shadow: inset 0 0 0 1px #e3ebf4;
  }

  .active .controls .close {
    border-color: #4c1717;
    background: linear-gradient(#e6a79b, #d6816f 50%, #b8361f 50%, #cf6a4c);
    box-shadow: inset 0 0 0 1px #e9b3a6;
  }

  /* Charts */
  .chart {
    flex: none;
    display: block;
    background: #000;
    shape-rendering: crispEdges;
    font-family: "DejaVu Sans Condensed", "DejaVu Sans", sans-serif;
    font-size: 9px;
  }

  .chart text {
    white-space: pre;
  }

  .chart text:not([fill]) {
    fill: #fff;
  }

  .smooth {
    shape-rendering: auto;
  }

  .frame {
    fill: none;
    stroke: #fff;
  }

  .profile {
    fill: none;
    stroke: #a0dfa0;
  }

  .average {
    fill: none;
    stroke: #800000;
    stroke-width: 2;
  }

  .mean {
    fill: none;
    stroke: #007a00;
    stroke-dasharray: 3 3;
  }

  .dot {
    stroke-dasharray: 3 3;
  }

  .dash {
    stroke-dasharray: 18 6;
  }

  .dashdot {
    stroke-dasharray: 9 3 3 3 3 3;
  }

  .green {
    stroke: #008000;
  }

  .yellow {
    stroke: #ffff00;
  }

  .red {
    stroke: #ff0000;
  }

  .magenta {
    stroke: #ff00ff;
  }

  .cyan {
    stroke: #00ffff;
  }

  .slate {
    stroke: #778899;
  }

  .session {
    stroke: #ffffff;
  }

  .session.sky {
    stroke: #7cb4dc;
  }

  .thick {
    fill: none;
    stroke-width: 2;
  }

  .trend {
    stroke: #ffff00;
    stroke-width: 3;
  }

  .g .edge {
    fill: #4fd0a0;
  }

  .g .body {
    fill: #00ff7f;
  }

  .m .edge {
    fill: #ff00ff;
  }

  .m .body {
    fill: #c71585;
  }

  .d .edge {
    fill: #00ff00;
  }

  .orchid .m .edge {
    fill: #da50d6;
  }

  .orchid .m .body {
    fill: #ff00ff;
  }

  .note,
  .pivot,
  .insanity text {
    font-family: "Liberation Sans", Arial, sans-serif;
  }

  .note {
    font-size: 16px;
  }

  .pivot {
    font-size: 13px;
  }

  .insanity text {
    font-size: 12px;
  }

  /* Time & sales */
  .sales-all,
  .sales-blocks {
    font-family: "Liberation Sans", Arial, sans-serif;
    font-size: 11px;
    color: #000;
  }

  .sales-all {
    left: 1763px;
    top: 1px;
    width: 157px;
    height: 748px;
    padding: 0 6px 7px 8px;
  }

  .sales-blocks {
    left: 1759px;
    top: 742px;
    width: 168px;
    height: 308px;
    padding: 0 0 4px 8px;
  }

  .sales-all .titlebar {
    margin: 0 -6px 0 -8px;
    padding: 8px 7px 0 10px;
  }

  .sales-blocks .titlebar {
    margin: 0 0 0 -8px;
    padding: 8px 0 0 10px;
  }

  .name {
    width: 6px;
    flex: none;
    color: #4d5561;
    font-family: "Open Sans", "Noto Sans", sans-serif;
    font-size: 12px;
    line-height: 17px;
    white-space: nowrap;
  }

  .sales-blocks .name {
    width: 22px;
    margin-left: 4px;
  }

  .link {
    flex: none;
    width: 17px;
    height: 17px;
    padding: 0;
    border: 1px solid #0d4f4a;
    background: #40e0d0;
    color: #06302d;
    font-family: "Open Sans", "Noto Sans", sans-serif;
    font-size: 11px;
    line-height: 15px;
  }

  .quote {
    width: 100%;
    flex: none;
    border-collapse: collapse;
    table-layout: fixed;
    border: 2px solid #6b6b6b;
    border-right: 1px solid #c0c0c0;
    border-bottom: 1px solid #c0c0c0;
    background: #fff;
  }

  .quote th,
  .quote td {
    height: 18px;
    padding: 0;
    border: 1px solid #c0c0c0;
    font-weight: 400;
    line-height: 18px;
    text-align: center;
  }

  .quote th {
    background: #f3f3f3;
  }

  .tape {
    flex: 1;
    min-height: 0;
    margin-top: 3px;
    padding: 6px 2px 0 11px;
    overflow: hidden;
    border: 2px solid #6b6b6b;
    border-width: 2px 1px 0 2px;
    border-right-color: #e6e6e6;
    background: #fff;
  }

  .tape table {
    width: 100%;
    table-layout: fixed;
    border-collapse: collapse;
  }

  .tape td {
    height: 12px;
    padding: 0;
    line-height: 12px;
  }

  .tape td:first-child {
    width: 63px;
  }

  .tape td:last-child {
    width: 24px;
    text-align: right;
  }

  .sales-blocks .tape {
    padding-right: 16px;
  }

  .tape .pink {
    color: #ff1493;
  }

  .tape .red {
    color: #dc143c;
  }

  .tape .lime {
    color: #00ff00;
  }

  .tape .green {
    color: #228b22;
  }

  .tape .chartreuse {
    color: #7fff00;
  }

  .taskbar {
    position: absolute;
    left: 1761px;
    right: 0;
    top: 1050px;
    height: 30px;
    display: flex;
    align-items: center;
    background: #8294ab;
    color: #fff;
    font-size: 12px;
  }

  .taskbar svg {
    margin-right: 4px;
  }

  .taskbar time {
    flex: 1;
    text-align: center;
  }

  .peek {
    align-self: stretch;
    width: 15px;
    padding: 0;
    border: 1px solid #3f4d60;
    background: linear-gradient(#a9b6c8, #54647b);
  }
</style>
